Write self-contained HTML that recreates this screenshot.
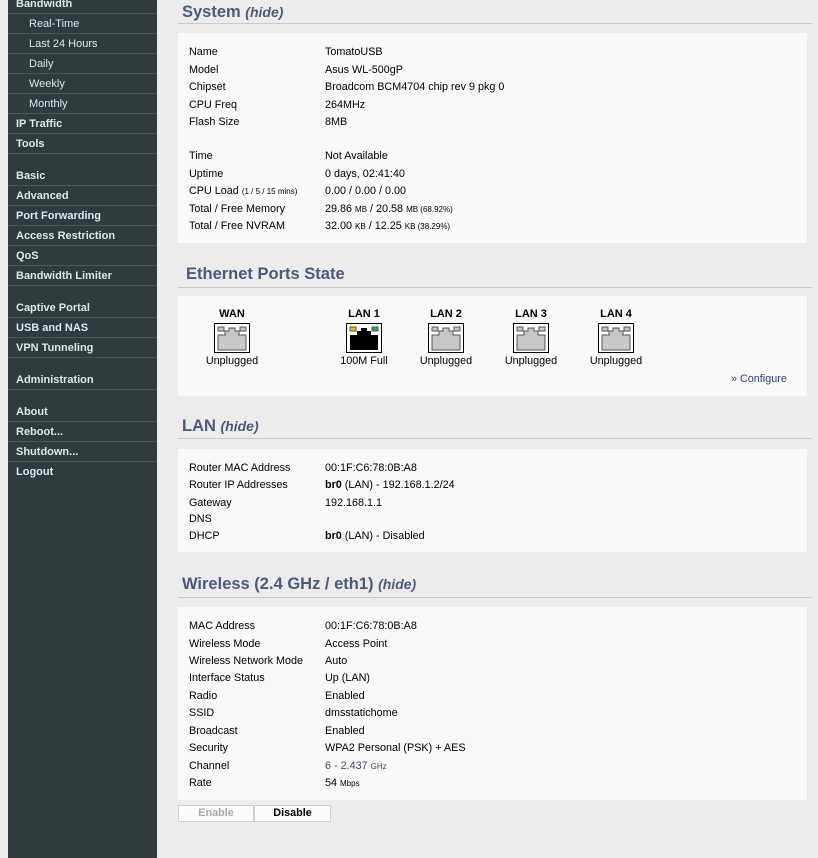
<!DOCTYPE html>
<html><head><meta charset="utf-8"><style>
*{margin:0;padding:0;box-sizing:border-box}
body{width:818px;height:858px;background:#ececec;font-family:"Liberation Sans",sans-serif;font-size:10.8px;color:#000;position:relative;overflow:hidden}
#nav{position:absolute;left:8px;top:0;width:149px;height:858px;background:#2f3b3d}
.n{position:absolute;left:0;width:149px;height:20px;line-height:20px;border-bottom:1px solid #4a5658;color:#dce8ee;font-weight:bold;padding-left:8px;font-size:11px}
.n.s{font-weight:normal;padding-left:21px}
.h{position:absolute;left:182px;font-family:"Liberation Sans",sans-serif;font-weight:bold;font-size:16.5px;color:#4b5a7c}
.h i{font-size:14px}
.hl{position:absolute;left:178px;width:634px;height:1px;background:#c8c8c8}
.box{position:absolute;left:178px;width:629px;background:#f9f9f9}
.r{position:absolute;height:14px;line-height:14px;white-space:nowrap}
.l{left:189px}.v{left:325px}
small{font-size:8px}
.p{position:absolute;width:80px;text-align:center}
.p b{display:block;height:15px;font-size:11px}
.p span{display:block;margin-top:2px}
.ic{display:block;margin:0 auto;width:36px;height:30px}
.btn{position:absolute;top:805px;height:17px;line-height:15px;text-align:center;background:#fbfbfb;border:1px solid #cfcfcf;font-weight:bold}
</style></head><body>
<div id="nav">
<div class="n" style="top:-6px">Bandwidth</div>
<div class="n s" style="top:14px">Real-Time</div>
<div class="n s" style="top:34px">Last 24 Hours</div>
<div class="n s" style="top:54px">Daily</div>
<div class="n s" style="top:74px">Weekly</div>
<div class="n s" style="top:94px">Monthly</div>
<div class="n" style="top:114px">IP Traffic</div>
<div class="n" style="top:134px">Tools</div>
<div class="n" style="top:166px">Basic</div>
<div class="n" style="top:186px">Advanced</div>
<div class="n" style="top:206px">Port Forwarding</div>
<div class="n" style="top:226px">Access Restriction</div>
<div class="n" style="top:246px">QoS</div>
<div class="n" style="top:266px">Bandwidth Limiter</div>
<div class="n" style="top:298px">Captive Portal</div>
<div class="n" style="top:318px">USB and NAS</div>
<div class="n" style="top:338px">VPN Tunneling</div>
<div class="n" style="top:370px">Administration</div>
<div class="n" style="top:402px">About</div>
<div class="n" style="top:422px">Reboot...</div>
<div class="n" style="top:442px">Shutdown...</div>
<div class="n" style="top:462px;border-bottom:none">Logout</div>
</div>

<div class="h" style="top:3px">System <i>(hide)</i></div>
<div class="hl" style="top:23px"></div>
<div class="box" style="top:33px;height:210px"></div>
<div class="r l" style="top:45px">Name</div><div class="r v" style="top:45px">TomatoUSB</div>
<div class="r l" style="top:63px">Model</div><div class="r v" style="top:63px">Asus WL-500gP</div>
<div class="r l" style="top:80px">Chipset</div><div class="r v" style="top:80px">Broadcom BCM4704 chip rev 9 pkg 0</div>
<div class="r l" style="top:98px">CPU Freq</div><div class="r v" style="top:98px">264MHz</div>
<div class="r l" style="top:115px">Flash Size</div><div class="r v" style="top:115px">8MB</div>
<div class="r l" style="top:149px">Time</div><div class="r v" style="top:149px">Not Available</div>
<div class="r l" style="top:167px">Uptime</div><div class="r v" style="top:167px">0 days, 02:41:40</div>
<div class="r l" style="top:184px">CPU Load <small>(1 / 5 / 15 mins)</small></div><div class="r v" style="top:184px">0.00 / 0.00 / 0.00</div>
<div class="r l" style="top:202px">Total / Free Memory</div><div class="r v" style="top:202px">29.86 <small>MB</small> / 20.58 <small>MB (68.92%)</small></div>
<div class="r l" style="top:219px">Total / Free NVRAM</div><div class="r v" style="top:219px">32.00 <small>KB</small> / 12.25 <small>KB (38.29%)</small></div>

<div class="h" style="top:265px;left:186px">Ethernet Ports State</div>
<div class="hl" style="top:287px"></div>
<div class="box" style="top:296px;height:100px"></div>
<svg width="0" height="0" style="position:absolute"><defs>
<symbol id="g" viewBox="0 0 36 30"><rect x=".5" y=".5" width="35" height="29" fill="#fff" stroke="#000"/><path d="M4 27V12h7V8h4V5h6v3h4v4h7v15z" fill="#c8c8c8" stroke="#555"/><rect x="4" y="4" width="6" height="4" fill="#c8c8c8" stroke="#555"/><rect x="26" y="4" width="6" height="4" fill="#c8c8c8" stroke="#555"/></symbol>
<symbol id="k" viewBox="0 0 36 30"><rect x=".5" y=".5" width="35" height="29" fill="#fff" stroke="#000"/><path d="M4 27V12h7V8h4V5h6v3h4v4h7v15z" fill="#000"/><rect x="4" y="4" width="6" height="4" fill="#f0c000" stroke="#555"/><rect x="26" y="4" width="6" height="4" fill="#20b040" stroke="#555"/></symbol>
</defs></svg>
<div class="p" style="left:192px;top:308px"><b>WAN</b><svg class="ic" viewBox="0 0 36 30"><use href="#g"/></svg><span>Unplugged</span></div>
<div class="p" style="left:324px;top:308px"><b>LAN 1</b><svg class="ic" viewBox="0 0 36 30"><use href="#k"/></svg><span>100M Full</span></div>
<div class="p" style="left:406px;top:308px"><b>LAN 2</b><svg class="ic" viewBox="0 0 36 30"><use href="#g"/></svg><span>Unplugged</span></div>
<div class="p" style="left:491px;top:308px"><b>LAN 3</b><svg class="ic" viewBox="0 0 36 30"><use href="#g"/></svg><span>Unplugged</span></div>
<div class="p" style="left:576px;top:308px"><b>LAN 4</b><svg class="ic" viewBox="0 0 36 30"><use href="#g"/></svg><span>Unplugged</span></div>
<div class="r" style="left:731px;top:372px;color:#2f3f6f">» Configure</div>

<div class="h" style="top:417px">LAN <i>(hide)</i></div>
<div class="hl" style="top:438px"></div>
<div class="box" style="top:449px;height:103px"></div>
<div class="r l" style="top:461px">Router MAC Address</div><div class="r v" style="top:461px">00:1F:C6:78:0B:A8</div>
<div class="r l" style="top:478px">Router IP Addresses</div><div class="r v" style="top:478px"><b>br0</b> (LAN) - 192.168.1.2/24</div>
<div class="r l" style="top:496px">Gateway</div><div class="r v" style="top:496px">192.168.1.1</div>
<div class="r l" style="top:512px">DNS</div>
<div class="r l" style="top:529px">DHCP</div><div class="r v" style="top:529px"><b>br0</b> (LAN) - Disabled</div>

<div class="h" style="top:575px">Wireless (2.4 GHz / eth1) <i>(hide)</i></div>
<div class="hl" style="top:597px"></div>
<div class="box" style="top:607px;height:193px"></div>
<div class="r l" style="top:619px">MAC Address</div><div class="r v" style="top:619px">00:1F:C6:78:0B:A8</div>
<div class="r l" style="top:637px">Wireless Mode</div><div class="r v" style="top:637px">Access Point</div>
<div class="r l" style="top:654px">Wireless Network Mode</div><div class="r v" style="top:654px">Auto</div>
<div class="r l" style="top:671px">Interface Status</div><div class="r v" style="top:671px">Up (LAN)</div>
<div class="r l" style="top:689px">Radio</div><div class="r v" style="top:689px">Enabled</div>
<div class="r l" style="top:706px">SSID</div><div class="r v" style="top:706px">dmsstatichome</div>
<div class="r l" style="top:724px">Broadcast</div><div class="r v" style="top:724px">Enabled</div>
<div class="r l" style="top:741px">Security</div><div class="r v" style="top:741px">WPA2 Personal (PSK) + AES</div>
<div class="r l" style="top:759px">Channel</div><div class="r v" style="top:759px;color:#3a4a6a">6 - 2.437 <small>GHz</small></div>
<div class="r l" style="top:776px">Rate</div><div class="r v" style="top:776px">54 <small>Mbps</small></div>
<div class="btn" style="left:178px;width:76px;color:#aaa">Enable</div>
<div class="btn" style="left:254px;width:77px">Disable</div>
</body></html>
